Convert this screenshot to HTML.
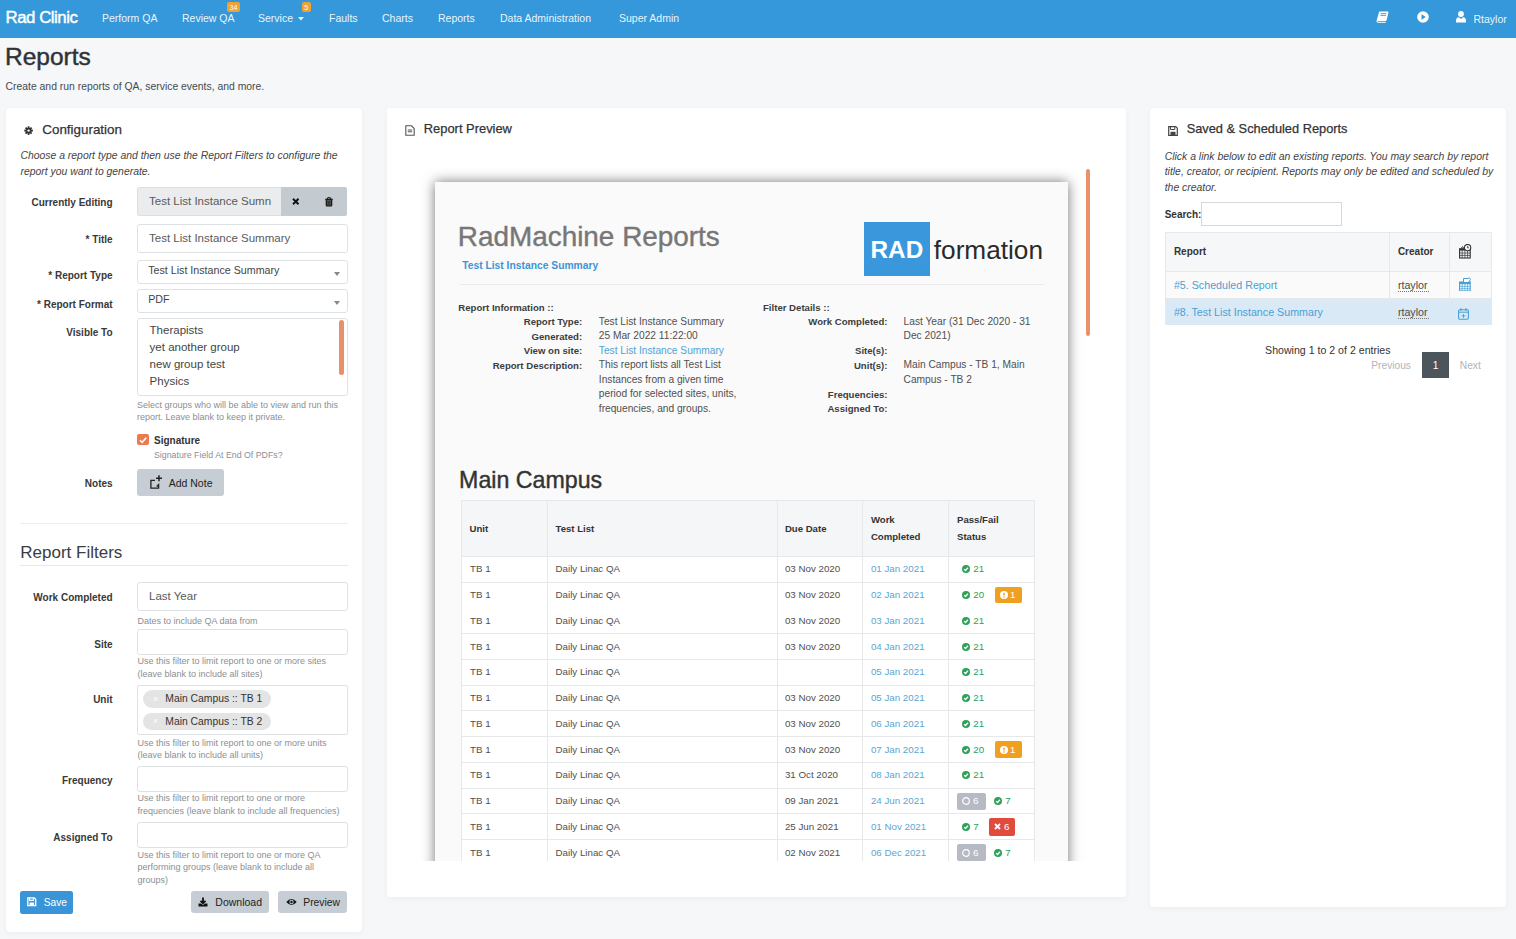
<!DOCTYPE html>
<html><head><meta charset="utf-8"><style>
html,body{margin:0;padding:0;}
body{width:1516px;height:939px;overflow:hidden;position:relative;background:#f5f7f9;font-family:"Liberation Sans",sans-serif;}
</style></head><body>
<div style="position:absolute;left:0px;top:0px;width:1516px;height:37.5px;background:#3498da;"></div>
<div style="position:absolute;top:9.88px;font-size:16.8px;line-height:16.8px;color:#fff;white-space:nowrap;left:5.50px;letter-spacing:-0.45px;-webkit-text-stroke:0.45px #fff;">Rad Clinic</div>
<div style="position:absolute;top:13.31px;font-size:10.5px;line-height:10.5px;color:#eaf4fb;white-space:nowrap;left:102.00px;">Perform QA</div>
<div style="position:absolute;top:13.31px;font-size:10.5px;line-height:10.5px;color:#eaf4fb;white-space:nowrap;left:182.00px;">Review QA</div>
<div style="position:absolute;left:227px;top:2px;width:13px;height:9.5px;background:#eea236;border-radius:2px;"></div>
<div style="position:absolute;top:3.61px;font-size:7.2px;line-height:7.2px;color:#fff;white-space:nowrap;left:227.00px;width:13px;text-align:center;">34</div>
<div style="position:absolute;top:13.31px;font-size:10.5px;line-height:10.5px;color:#eaf4fb;white-space:nowrap;left:258.00px;">Service</div>
<svg style="position:absolute;left:298px;top:17px;" width="6" height="4" viewBox="0 0 6 4"><path d="M0 0H6L3 3.5Z" fill="#eaf4fb"/></svg>
<div style="position:absolute;left:301.5px;top:2px;width:9.5px;height:9.5px;background:#eea236;border-radius:2px;"></div>
<div style="position:absolute;top:3.61px;font-size:7.2px;line-height:7.2px;color:#fff;white-space:nowrap;left:301.25px;width:10px;text-align:center;">5</div>
<div style="position:absolute;top:13.31px;font-size:10.5px;line-height:10.5px;color:#eaf4fb;white-space:nowrap;left:329.00px;">Faults</div>
<div style="position:absolute;top:13.31px;font-size:10.5px;line-height:10.5px;color:#eaf4fb;white-space:nowrap;left:382.00px;">Charts</div>
<div style="position:absolute;top:13.31px;font-size:10.5px;line-height:10.5px;color:#eaf4fb;white-space:nowrap;left:438.00px;">Reports</div>
<div style="position:absolute;top:13.31px;font-size:10.5px;line-height:10.5px;color:#eaf4fb;white-space:nowrap;left:500.00px;">Data Administration</div>
<div style="position:absolute;top:13.31px;font-size:10.5px;line-height:10.5px;color:#eaf4fb;white-space:nowrap;left:619.00px;">Super Admin</div>
<svg style="position:absolute;left:1375.5px;top:11.3px;" width="13" height="12" viewBox="0 0 13 12"><path d="M3.2 0.6H11.6Q12.6 0.6 12.4 1.6L10.6 9.2Q10.4 10 9.6 10H1.6Q0.6 10 0.8 9Z" fill="#fff"/><path d="M4.8 2.6H10.3M4.4 4.4H9.9" stroke="#3498da" stroke-width="0.9"/><path d="M0.9 9.6Q0.7 11.3 2 11.3H9.8" stroke="#fff" stroke-width="1" fill="none"/></svg>
<svg style="position:absolute;left:1417px;top:11px;" width="12" height="12" viewBox="0 0 12 12"><circle cx="6" cy="6" r="5.8" fill="#fff"/><path d="M4.5 3.2V8.8L8.8 6Z" fill="#3598da"/></svg>
<svg style="position:absolute;left:1456px;top:11px;" width="10" height="12" viewBox="0 0 10 12"><circle cx="5" cy="3" r="2.9" fill="#fff"/><path d="M0 11.5V9.5Q0 6.5 3 6.3L5 8L7 6.3Q10 6.5 10 9.5V11.5Z" fill="#fff"/></svg>
<div style="position:absolute;top:13.81px;font-size:10.5px;line-height:10.5px;color:#eaf4fb;white-space:nowrap;left:1473.50px;">Rtaylor</div>
<div style="position:absolute;top:44.96px;font-size:24.5px;line-height:24.5px;color:#2f3237;white-space:nowrap;left:5.00px;-webkit-text-stroke:0.45px #2f3237;">Reports</div>
<div style="position:absolute;top:81.70px;font-size:10.4px;line-height:10.4px;color:#454a50;white-space:nowrap;left:5.50px;">Create and run reports of QA, service events, and more.</div>
<div style="position:absolute;left:6px;top:108px;width:356px;height:824px;background:#fff;border-radius:4px;box-shadow:0 2px 6px rgba(0,0,0,0.045);"></div>
<div style="position:absolute;left:386.5px;top:108px;width:739.0px;height:788.8px;background:#fff;border-radius:4px;box-shadow:0 2px 6px rgba(0,0,0,0.045);border-radius:3px;"></div>
<div style="position:absolute;left:1150px;top:108px;width:355.70000000000005px;height:798.5px;background:#fff;border-radius:4px;box-shadow:0 2px 6px rgba(0,0,0,0.045);"></div>
<svg style="position:absolute;left:23.8px;top:125.9px;" width="9.2" height="9.2" viewBox="0 0 10 10"><g fill="#333"><circle cx="5" cy="5" r="3.2"/><rect x="4" y="0.3" width="2" height="2.4" transform="rotate(0 5 5)"/><rect x="4" y="0.3" width="2" height="2.4" transform="rotate(45 5 5)"/><rect x="4" y="0.3" width="2" height="2.4" transform="rotate(90 5 5)"/><rect x="4" y="0.3" width="2" height="2.4" transform="rotate(135 5 5)"/><rect x="4" y="0.3" width="2" height="2.4" transform="rotate(180 5 5)"/><rect x="4" y="0.3" width="2" height="2.4" transform="rotate(225 5 5)"/><rect x="4" y="0.3" width="2" height="2.4" transform="rotate(270 5 5)"/><rect x="4" y="0.3" width="2" height="2.4" transform="rotate(315 5 5)"/></g><circle cx="5" cy="5" r="1.3" fill="#fff"/></svg>
<div style="position:absolute;top:122.86px;font-size:13.4px;line-height:13.4px;color:#333;white-space:nowrap;left:42.30px;-webkit-text-stroke:0.25px #333;">Configuration</div>
<div style="position:absolute;top:151.30px;font-size:10.4px;line-height:10.4px;color:#444;white-space:nowrap;font-style:italic;left:20.50px;">Choose a report type and then use the Report Filters to configure the</div>
<div style="position:absolute;top:166.80px;font-size:10.4px;line-height:10.4px;color:#444;white-space:nowrap;font-style:italic;left:20.50px;">report you want to generate.</div>
<div style="position:absolute;top:198.43px;font-size:10px;line-height:10px;color:#383838;white-space:nowrap;font-weight:bold;left:2.60px;width:110px;text-align:right;">Currently Editing</div>
<div style="position:absolute;left:137px;top:186.8px;width:144.3px;height:29.399999999999977px;background:#ebeced;border:1px solid #dcdfe2;border-right:none;border-radius:3px 0 0 3px;box-sizing:border-box;"></div>
<div style="position:absolute;top:195.77px;font-size:11.5px;line-height:11.5px;color:#5a5a5a;white-space:nowrap;left:149.00px;">Test List Instance Sumn</div>
<div style="position:absolute;left:281.3px;top:186.5px;width:65.69999999999999px;height:29.30000000000001px;background:#c3cbd1;border-radius:0 2px 2px 0;"></div>
<svg style="position:absolute;left:291.7px;top:198.2px;" width="7.5" height="7" viewBox="0 0 7.5 7"><path d="M1 0.8L6.5 6.2M6.5 0.8L1 6.2" stroke="#111" stroke-width="1.9"/></svg>
<svg style="position:absolute;left:324.6px;top:197px;" width="8" height="9.5" viewBox="0 0 8 9.5"><path d="M0.3 2.3H7.7" stroke="#111" stroke-width="1.3"/><path d="M2.6 2V1.1Q2.6 0.5 3.2 0.5H4.8Q5.4 0.5 5.4 1.1V2" stroke="#111" stroke-width="1" fill="none"/><path d="M1.3 3V8.3Q1.3 9 2 9H6Q6.7 9 6.7 8.3V3" stroke="#111" stroke-width="1.2" fill="#555"/><path d="M3.2 4V8M4.8 4V8" stroke="#111" stroke-width="0.6"/></svg>
<div style="position:absolute;top:234.73px;font-size:10px;line-height:10px;color:#383838;white-space:nowrap;font-weight:bold;left:2.60px;width:110px;text-align:right;">* Title</div>
<div style="position:absolute;left:137px;top:223.5px;width:210.5px;height:29.0px;background:#fff;border:1px solid #dfe2e5;border-radius:3px;box-sizing:border-box;"></div>
<div style="position:absolute;top:232.77px;font-size:11.5px;line-height:11.5px;color:#5a5a5a;white-space:nowrap;left:149.00px;">Test List Instance Summary</div>
<div style="position:absolute;top:270.54px;font-size:10px;line-height:10px;color:#383838;white-space:nowrap;font-weight:bold;left:2.60px;width:110px;text-align:right;">* Report Type</div>
<div style="position:absolute;left:137px;top:259.5px;width:210.5px;height:24.5px;background:#fff;border:1px solid #dfe2e5;border-radius:3px;box-sizing:border-box;"></div>
<div style="position:absolute;top:265.24px;font-size:10.7px;line-height:10.7px;color:#444;white-space:nowrap;left:148.20px;">Test List Instance Summary</div>
<svg style="position:absolute;left:334px;top:271.5px;" width="6" height="4" viewBox="0 0 6 4"><path d="M0 0H6L3 4Z" fill="#888"/></svg>
<div style="position:absolute;top:299.54px;font-size:10px;line-height:10px;color:#383838;white-space:nowrap;font-weight:bold;left:2.60px;width:110px;text-align:right;">* Report Format</div>
<div style="position:absolute;left:137px;top:288.5px;width:210.5px;height:24.5px;background:#fff;border:1px solid #dfe2e5;border-radius:3px;box-sizing:border-box;"></div>
<div style="position:absolute;top:294.24px;font-size:10.7px;line-height:10.7px;color:#444;white-space:nowrap;left:148.20px;">PDF</div>
<svg style="position:absolute;left:334px;top:300.5px;" width="6" height="4" viewBox="0 0 6 4"><path d="M0 0H6L3 4Z" fill="#888"/></svg>
<div style="position:absolute;top:328.04px;font-size:10px;line-height:10px;color:#383838;white-space:nowrap;font-weight:bold;left:2.60px;width:110px;text-align:right;">Visible To</div>
<div style="position:absolute;left:137px;top:317.5px;width:210.5px;height:78.0px;background:#fff;border:1px solid #dfe2e5;border-radius:3px;box-sizing:border-box;"></div>
<div style="position:absolute;top:324.57px;font-size:11.5px;line-height:11.5px;color:#444;white-space:nowrap;left:149.60px;">Therapists</div>
<div style="position:absolute;top:341.77px;font-size:11.5px;line-height:11.5px;color:#444;white-space:nowrap;left:149.60px;">yet another group</div>
<div style="position:absolute;top:358.97px;font-size:11.5px;line-height:11.5px;color:#444;white-space:nowrap;left:149.60px;">new group test</div>
<div style="position:absolute;top:376.17px;font-size:11.5px;line-height:11.5px;color:#444;white-space:nowrap;left:149.60px;">Physics</div>
<div style="position:absolute;left:138px;top:392px;width:200px;height:3px;overflow:hidden;"><div style="position:absolute;left:11.6px;top:-10px;font-size:11.5px;line-height:12px;color:#444;">Administrators</div></div>
<div style="position:absolute;left:339px;top:320px;width:5px;height:55px;background:#e8906a;border-radius:3px;"></div>
<div style="position:absolute;top:401.08px;font-size:9px;line-height:9px;color:#8a8f94;white-space:nowrap;left:137.00px;">Select groups who will be able to view and run this</div>
<div style="position:absolute;top:413.08px;font-size:9px;line-height:9px;color:#8a8f94;white-space:nowrap;left:137.00px;">report. Leave blank to keep it private.</div>
<div style="position:absolute;left:137px;top:433.8px;width:12.199999999999989px;height:11.599999999999966px;background:#ec7a4f;border-radius:2px;"></div>
<svg style="position:absolute;left:137px;top:433.8px;" width="12" height="12" viewBox="0 0 12 12"><path d="M3 6.2L5.2 8.3L9.2 3.8" stroke="#fff" stroke-width="1.5" fill="none"/></svg>
<div style="position:absolute;top:436.24px;font-size:10px;line-height:10px;color:#333;white-space:nowrap;font-weight:bold;left:154.00px;">Signature</div>
<div style="position:absolute;top:451.25px;font-size:8.8px;line-height:8.8px;color:#8a8f94;white-space:nowrap;left:154.00px;">Signature Field At End Of PDFs?</div>
<div style="position:absolute;top:479.24px;font-size:10px;line-height:10px;color:#383838;white-space:nowrap;font-weight:bold;left:2.60px;width:110px;text-align:right;">Notes</div>
<div style="position:absolute;left:137px;top:469.2px;width:86.5px;height:26.600000000000023px;background:#c6cdd4;border-radius:3px;"></div>
<svg style="position:absolute;left:149.5px;top:474px;" width="13" height="15" viewBox="0 0 13 15"><path d="M5 6.3H0.9V14.2H8.6V10.5L7.2 11.9V12.8" stroke="#222" stroke-width="1.3" fill="none"/><path d="M9 1.2V7.2M6 4.2H12" stroke="#222" stroke-width="1.5"/></svg>
<div style="position:absolute;top:478.01px;font-size:10.5px;line-height:10.5px;color:#222;white-space:nowrap;left:168.70px;">Add Note</div>
<div style="position:absolute;left:20px;top:523px;width:328px;height:1px;background:#eceff1;"></div>
<div style="position:absolute;top:544.11px;font-size:17px;line-height:17px;color:#3a3d41;white-space:nowrap;left:20.30px;">Report Filters</div>
<div style="position:absolute;left:20px;top:564.5px;width:328px;height:1.0px;background:#e6e9ec;"></div>
<div style="position:absolute;top:592.94px;font-size:10px;line-height:10px;color:#383838;white-space:nowrap;font-weight:bold;left:2.60px;width:110px;text-align:right;">Work Completed</div>
<div style="position:absolute;left:137px;top:581.5px;width:210.5px;height:29.0px;background:#fff;border:1px solid #dfe2e5;border-radius:3px;box-sizing:border-box;"></div>
<div style="position:absolute;top:591.47px;font-size:11.5px;line-height:11.5px;color:#5a5a5a;white-space:nowrap;left:149.00px;">Last Year</div>
<div style="position:absolute;top:616.68px;font-size:9px;line-height:9px;color:#8a8f94;white-space:nowrap;left:137.50px;">Dates to include QA data from</div>
<div style="position:absolute;top:639.63px;font-size:10px;line-height:10px;color:#383838;white-space:nowrap;font-weight:bold;left:2.60px;width:110px;text-align:right;">Site</div>
<div style="position:absolute;left:137px;top:628.5px;width:210.5px;height:26.0px;background:#fff;border:1px solid #dfe2e5;border-radius:3px;box-sizing:border-box;"></div>
<div style="position:absolute;top:657.28px;font-size:9px;line-height:9px;color:#8a8f94;white-space:nowrap;left:137.50px;">Use this filter to limit report to one or more sites</div>
<div style="position:absolute;top:670.28px;font-size:9px;line-height:9px;color:#8a8f94;white-space:nowrap;left:137.50px;">(leave blank to include all sites)</div>
<div style="position:absolute;top:694.84px;font-size:10px;line-height:10px;color:#383838;white-space:nowrap;font-weight:bold;left:2.60px;width:110px;text-align:right;">Unit</div>
<div style="position:absolute;left:137px;top:685.3px;width:210.5px;height:50.200000000000045px;background:#fff;border:1px solid #dfe2e5;border-radius:3px;box-sizing:border-box;border-radius:2px;"></div>
<div style="position:absolute;left:142.5px;top:690.2px;width:128.5px;height:17.600000000000023px;background:#e4e4e4;border-radius:9px;"></div>
<div style="position:absolute;top:694.88px;font-size:9px;line-height:9px;color:#fff;white-space:nowrap;left:153.00px;">×</div>
<div style="position:absolute;top:694.14px;font-size:10.35px;line-height:10.35px;color:#333;white-space:nowrap;left:165.30px;">Main Campus :: TB 1</div>
<div style="position:absolute;left:142.5px;top:712.7px;width:128.5px;height:17.600000000000023px;background:#e4e4e4;border-radius:9px;"></div>
<div style="position:absolute;top:717.38px;font-size:9px;line-height:9px;color:#fff;white-space:nowrap;left:153.00px;">×</div>
<div style="position:absolute;top:716.64px;font-size:10.35px;line-height:10.35px;color:#333;white-space:nowrap;left:165.30px;">Main Campus :: TB 2</div>
<div style="position:absolute;top:738.68px;font-size:9px;line-height:9px;color:#8a8f94;white-space:nowrap;left:137.50px;">Use this filter to limit report to one or more units</div>
<div style="position:absolute;top:750.98px;font-size:9px;line-height:9px;color:#8a8f94;white-space:nowrap;left:137.50px;">(leave blank to include all units)</div>
<div style="position:absolute;top:776.44px;font-size:10px;line-height:10px;color:#383838;white-space:nowrap;font-weight:bold;left:2.60px;width:110px;text-align:right;">Frequency</div>
<div style="position:absolute;left:137px;top:765.5px;width:210.5px;height:26.0px;background:#fff;border:1px solid #dfe2e5;border-radius:3px;box-sizing:border-box;"></div>
<div style="position:absolute;top:794.48px;font-size:9px;line-height:9px;color:#8a8f94;white-space:nowrap;left:137.50px;">Use this filter to limit report to one or more</div>
<div style="position:absolute;top:807.38px;font-size:9px;line-height:9px;color:#8a8f94;white-space:nowrap;left:137.50px;">frequencies (leave blank to include all frequencies)</div>
<div style="position:absolute;top:832.74px;font-size:10px;line-height:10px;color:#383838;white-space:nowrap;font-weight:bold;left:2.60px;width:110px;text-align:right;">Assigned To</div>
<div style="position:absolute;left:137px;top:822.3px;width:210.5px;height:25.40000000000009px;background:#fff;border:1px solid #dfe2e5;border-radius:3px;box-sizing:border-box;"></div>
<div style="position:absolute;top:851.08px;font-size:9px;line-height:9px;color:#8a8f94;white-space:nowrap;left:137.50px;">Use this filter to limit report to one or more QA</div>
<div style="position:absolute;top:863.48px;font-size:9px;line-height:9px;color:#8a8f94;white-space:nowrap;left:137.50px;">performing groups (leave blank to include all</div>
<div style="position:absolute;top:875.88px;font-size:9px;line-height:9px;color:#8a8f94;white-space:nowrap;left:137.50px;">groups)</div>
<div style="position:absolute;left:20.2px;top:891px;width:53.2px;height:22.700000000000045px;background:#3a95d8;border-radius:2.5px;"></div>
<svg style="position:absolute;left:27.3px;top:897px;" width="9.5" height="9.5" viewBox="0 0 9.5 9.5"><path d="M0.8 0.8H7.3L8.7 2.2V8.7H0.8Z" stroke="#fff" stroke-width="1.3" fill="none"/><path d="M2.6 1V3.4H6.4V1" stroke="#fff" stroke-width="1.1" fill="none"/><rect x="2.6" y="5.5" width="4.4" height="2.6" fill="#fff"/></svg>
<div style="position:absolute;top:897.67px;font-size:10.2px;line-height:10.2px;color:#fff;white-space:nowrap;left:43.80px;">Save</div>
<div style="position:absolute;left:191px;top:891px;width:78px;height:22.200000000000045px;background:#c6cdd4;border-radius:3px;"></div>
<svg style="position:absolute;left:198.3px;top:896.5px;" width="10" height="10" viewBox="0 0 10 10"><path d="M5 0.5V6M2.5 3.8L5 6.3L7.5 3.8" stroke="#111" stroke-width="1.8" fill="none"/><path d="M0.5 6.5V9.5H9.5V6.5H7L5 8L3 6.5Z" fill="#111"/></svg>
<div style="position:absolute;top:896.81px;font-size:10.5px;line-height:10.5px;color:#222;white-space:nowrap;left:215.30px;">Download</div>
<div style="position:absolute;left:278px;top:891px;width:69.19999999999999px;height:22.200000000000045px;background:#c6cdd4;border-radius:3px;"></div>
<svg style="position:absolute;left:285.5px;top:898px;" width="11" height="8" viewBox="0 0 11 8"><path d="M0.3 4Q5.5 -2 10.7 4Q5.5 10 0.3 4Z" fill="#111"/><circle cx="5.5" cy="4" r="2.2" fill="#c6cdd4"/><circle cx="5.5" cy="4" r="1.2" fill="#111"/></svg>
<div style="position:absolute;top:898.08px;font-size:10.3px;line-height:10.3px;color:#222;white-space:nowrap;left:303.30px;">Preview</div>
<svg style="position:absolute;left:405px;top:124.8px;" width="10" height="11" viewBox="0 0 10 11"><path d="M0.8 0.8H6.5L9.2 3.5V10.2H0.8Z" stroke="#555" stroke-width="1.1" fill="none"/><path d="M2.8 5H7.2M2.8 6.8H7.2" stroke="#555" stroke-width="1.1"/></svg>
<div style="position:absolute;top:123.28px;font-size:12.9px;line-height:12.9px;color:#333;white-space:nowrap;left:423.80px;-webkit-text-stroke:0.25px #333;">Report Preview</div>
<div style="position:absolute;left:420px;top:167px;width:673px;height:694px;overflow:hidden;"><div style="position:absolute;left:-420px;top:-167px;width:1516px;height:1200px;">
<div style="position:absolute;left:435px;top:181.5px;width:633px;height:1218.5px;background:#fafafa;box-shadow:0 0 12px rgba(0,0,0,0.55);"></div>
<div style="position:absolute;top:222.98px;font-size:27.9px;line-height:27.9px;color:#777;white-space:nowrap;left:457.80px;-webkit-text-stroke:0.4px #777;">RadMachine Reports</div>
<div style="position:absolute;top:261.28px;font-size:10.3px;line-height:10.3px;color:#3d94d6;white-space:nowrap;font-weight:bold;left:462.20px;">Test List Instance Summary</div>
<div style="position:absolute;left:459.5px;top:284px;width:584.5px;height:1px;background:#ebebeb;"></div>
<div style="position:absolute;left:864.3px;top:222px;width:65.40000000000009px;height:53.5px;background:#3b97dc;"></div>
<div style="position:absolute;top:238.33px;font-size:24.3px;line-height:24.3px;color:#fff;white-space:nowrap;font-weight:bold;left:864.40px;width:65px;text-align:center;">RAD</div>
<div style="position:absolute;top:236.72px;font-size:26.2px;line-height:26.2px;color:#2a2a2a;white-space:nowrap;left:933.80px;">formation</div>
<div style="position:absolute;top:303.37px;font-size:9.6px;line-height:9.6px;color:#3d3d3d;white-space:nowrap;font-weight:bold;left:458.30px;">Report Information ::</div>
<div style="position:absolute;top:317.27px;font-size:9.6px;line-height:9.6px;color:#3d3d3d;white-space:nowrap;font-weight:bold;left:432.20px;width:150px;text-align:right;">Report Type:</div>
<div style="position:absolute;top:316.77px;font-size:10.2px;line-height:10.2px;color:#505050;white-space:nowrap;left:598.80px;">Test List Instance Summary</div>
<div style="position:absolute;top:331.77px;font-size:9.6px;line-height:9.6px;color:#3d3d3d;white-space:nowrap;font-weight:bold;left:432.20px;width:150px;text-align:right;">Generated:</div>
<div style="position:absolute;top:331.27px;font-size:10.2px;line-height:10.2px;color:#505050;white-space:nowrap;left:598.80px;">25 Mar 2022 11:22:00</div>
<div style="position:absolute;top:346.27px;font-size:9.6px;line-height:9.6px;color:#3d3d3d;white-space:nowrap;font-weight:bold;left:432.20px;width:150px;text-align:right;">View on site:</div>
<div style="position:absolute;top:345.77px;font-size:10.2px;line-height:10.2px;color:#4fa3d6;white-space:nowrap;left:598.80px;">Test List Instance Summary</div>
<div style="position:absolute;top:360.77px;font-size:9.6px;line-height:9.6px;color:#3d3d3d;white-space:nowrap;font-weight:bold;left:432.20px;width:150px;text-align:right;">Report Description:</div>
<div style="position:absolute;top:360.27px;font-size:10.2px;line-height:10.2px;color:#505050;white-space:nowrap;left:598.80px;">This report lists all Test List</div>
<div style="position:absolute;top:374.77px;font-size:10.2px;line-height:10.2px;color:#505050;white-space:nowrap;left:598.80px;">Instances from a given time</div>
<div style="position:absolute;top:389.27px;font-size:10.2px;line-height:10.2px;color:#505050;white-space:nowrap;left:598.80px;">period for selected sites, units,</div>
<div style="position:absolute;top:403.77px;font-size:10.2px;line-height:10.2px;color:#505050;white-space:nowrap;left:598.80px;">frequencies, and groups.</div>
<div style="position:absolute;top:303.37px;font-size:9.6px;line-height:9.6px;color:#3d3d3d;white-space:nowrap;font-weight:bold;left:763.00px;">Filter Details ::</div>
<div style="position:absolute;top:317.27px;font-size:9.6px;line-height:9.6px;color:#3d3d3d;white-space:nowrap;font-weight:bold;left:737.50px;width:150px;text-align:right;">Work Completed:</div>
<div style="position:absolute;top:316.77px;font-size:10.2px;line-height:10.2px;color:#505050;white-space:nowrap;left:903.60px;">Last Year (31 Dec 2020 - 31</div>
<div style="position:absolute;top:331.27px;font-size:10.2px;line-height:10.2px;color:#505050;white-space:nowrap;left:903.60px;">Dec 2021)</div>
<div style="position:absolute;top:346.27px;font-size:9.6px;line-height:9.6px;color:#3d3d3d;white-space:nowrap;font-weight:bold;left:737.50px;width:150px;text-align:right;">Site(s):</div>
<div style="position:absolute;top:360.77px;font-size:9.6px;line-height:9.6px;color:#3d3d3d;white-space:nowrap;font-weight:bold;left:737.50px;width:150px;text-align:right;">Unit(s):</div>
<div style="position:absolute;top:360.27px;font-size:10.2px;line-height:10.2px;color:#505050;white-space:nowrap;left:903.60px;">Main Campus - TB 1, Main</div>
<div style="position:absolute;top:374.77px;font-size:10.2px;line-height:10.2px;color:#505050;white-space:nowrap;left:903.60px;">Campus - TB 2</div>
<div style="position:absolute;top:389.77px;font-size:9.6px;line-height:9.6px;color:#3d3d3d;white-space:nowrap;font-weight:bold;left:737.50px;width:150px;text-align:right;">Frequencies:</div>
<div style="position:absolute;top:404.27px;font-size:9.6px;line-height:9.6px;color:#3d3d3d;white-space:nowrap;font-weight:bold;left:737.50px;width:150px;text-align:right;">Assigned To:</div>
<div style="position:absolute;top:469.46px;font-size:23.2px;line-height:23.2px;color:#333;white-space:nowrap;left:459.10px;-webkit-text-stroke:0.4px #333;">Main Campus</div>
<div style="position:absolute;left:461.2px;top:500.4px;width:573.3999999999999px;height:55.80000000000007px;background:#f4f6f8;"></div>
<div style="position:absolute;left:461.2px;top:1000px;width:573.3999999999999px;height:1px;"></div>
<div style="position:absolute;left:461.2px;top:556.2px;width:573.3999999999999px;height:314.12px;background:#fff;"></div>
<div style="position:absolute;left:461.2px;top:500.4px;width:573.3999999999999px;height:1.0px;background:#e6e8ea;"></div>
<div style="position:absolute;left:461.2px;top:555.7px;width:573.3999999999999px;height:1.0px;background:#e6e8ea;"></div>
<div style="position:absolute;left:461.2px;top:581.5px;width:573.3999999999999px;height:1.0px;background:#e6e8ea;"></div>
<div style="position:absolute;left:461.2px;top:633.0px;width:573.3999999999999px;height:1.0px;background:#e6e8ea;"></div>
<div style="position:absolute;left:461.2px;top:658.7px;width:573.3999999999999px;height:1.0px;background:#e6e8ea;"></div>
<div style="position:absolute;left:461.2px;top:684.5px;width:573.3999999999999px;height:1.0px;background:#e6e8ea;"></div>
<div style="position:absolute;left:461.2px;top:710.3px;width:573.3999999999999px;height:1.0px;background:#e6e8ea;"></div>
<div style="position:absolute;left:461.2px;top:736.0px;width:573.3999999999999px;height:1.0px;background:#e6e8ea;"></div>
<div style="position:absolute;left:461.2px;top:761.8px;width:573.3999999999999px;height:1.0px;background:#e6e8ea;"></div>
<div style="position:absolute;left:461.2px;top:787.5px;width:573.3999999999999px;height:1.0px;background:#e6e8ea;"></div>
<div style="position:absolute;left:461.2px;top:813.3px;width:573.3999999999999px;height:1.0px;background:#e6e8ea;"></div>
<div style="position:absolute;left:461.2px;top:839.1px;width:573.3999999999999px;height:1.0px;background:#e6e8ea;"></div>
<div style="position:absolute;left:461.2px;top:864.8px;width:573.3999999999999px;height:1.0px;background:#e6e8ea;"></div>
<div style="position:absolute;left:460.7px;top:500.4px;width:1.0px;height:399.6px;background:#e6e8ea;"></div>
<div style="position:absolute;left:546.8px;top:500.4px;width:1.0px;height:399.6px;background:#e6e8ea;"></div>
<div style="position:absolute;left:776.5px;top:500.4px;width:1.0px;height:399.6px;background:#e6e8ea;"></div>
<div style="position:absolute;left:862.0px;top:500.4px;width:1.0px;height:399.6px;background:#e6e8ea;"></div>
<div style="position:absolute;left:948.1px;top:500.4px;width:1.0px;height:399.6px;background:#e6e8ea;"></div>
<div style="position:absolute;left:1034.1px;top:500.4px;width:1.0px;height:399.6px;background:#e6e8ea;"></div>
<div style="position:absolute;top:524.07px;font-size:9.6px;line-height:9.6px;color:#333;white-space:nowrap;font-weight:bold;left:469.50px;">Unit</div>
<div style="position:absolute;top:524.07px;font-size:9.6px;line-height:9.6px;color:#333;white-space:nowrap;font-weight:bold;left:555.50px;">Test List</div>
<div style="position:absolute;top:524.07px;font-size:9.6px;line-height:9.6px;color:#333;white-space:nowrap;font-weight:bold;left:784.90px;">Due Date</div>
<div style="position:absolute;top:514.87px;font-size:9.6px;line-height:9.6px;color:#333;white-space:nowrap;font-weight:bold;left:870.90px;">Work</div>
<div style="position:absolute;top:532.07px;font-size:9.6px;line-height:9.6px;color:#333;white-space:nowrap;font-weight:bold;left:870.90px;">Completed</div>
<div style="position:absolute;top:514.87px;font-size:9.6px;line-height:9.6px;color:#333;white-space:nowrap;font-weight:bold;left:957.00px;">Pass/Fail</div>
<div style="position:absolute;top:532.07px;font-size:9.6px;line-height:9.6px;color:#333;white-space:nowrap;font-weight:bold;left:957.00px;">Status</div>
<div style="position:absolute;top:564.25px;font-size:9.75px;line-height:9.75px;color:#505050;white-space:nowrap;left:470.00px;">TB 1</div>
<div style="position:absolute;top:564.25px;font-size:9.75px;line-height:9.75px;color:#505050;white-space:nowrap;left:555.50px;">Daily Linac QA</div>
<div style="position:absolute;top:564.25px;font-size:9.75px;line-height:9.75px;color:#505050;white-space:nowrap;left:784.90px;">03 Nov 2020</div>
<div style="position:absolute;top:564.25px;font-size:9.75px;line-height:9.75px;color:#5aa6d4;white-space:nowrap;left:870.90px;">01 Jan 2021</div>
<svg style="position:absolute;left:961.8px;top:565.2px;" width="8" height="8" viewBox="0 0 8 8"><circle cx="4" cy="4" r="4" fill="#2ea15a"/><path d="M2.1 4.1L3.5 5.5L6 2.8" stroke="#fff" stroke-width="1.3" fill="none"/></svg>
<div style="position:absolute;top:564.25px;font-size:9.75px;line-height:9.75px;color:#2ea15a;white-space:nowrap;left:973.30px;">21</div>
<div style="position:absolute;top:590.01px;font-size:9.75px;line-height:9.75px;color:#505050;white-space:nowrap;left:470.00px;">TB 1</div>
<div style="position:absolute;top:590.01px;font-size:9.75px;line-height:9.75px;color:#505050;white-space:nowrap;left:555.50px;">Daily Linac QA</div>
<div style="position:absolute;top:590.01px;font-size:9.75px;line-height:9.75px;color:#505050;white-space:nowrap;left:784.90px;">03 Nov 2020</div>
<div style="position:absolute;top:590.01px;font-size:9.75px;line-height:9.75px;color:#5aa6d4;white-space:nowrap;left:870.90px;">02 Jan 2021</div>
<svg style="position:absolute;left:961.8px;top:591.0px;" width="8" height="8" viewBox="0 0 8 8"><circle cx="4" cy="4" r="4" fill="#2ea15a"/><path d="M2.1 4.1L3.5 5.5L6 2.8" stroke="#fff" stroke-width="1.3" fill="none"/></svg>
<div style="position:absolute;top:590.01px;font-size:9.75px;line-height:9.75px;color:#2ea15a;white-space:nowrap;left:973.30px;">20</div>
<div style="position:absolute;left:994.9px;top:586.8px;width:26.800000000000068px;height:16.700000000000045px;background:#f0a020;border-radius:2px;"></div>
<svg style="position:absolute;left:999.5px;top:591.0px;" width="8" height="8" viewBox="0 0 8 8"><circle cx="4" cy="4" r="4" fill="#fff"/><path d="M4 1.8V4.6" stroke="#f0a020" stroke-width="1.4"/><circle cx="4" cy="6" r="0.75" fill="#f0a020"/></svg>
<div style="position:absolute;top:590.01px;font-size:9.75px;line-height:9.75px;color:#fff;white-space:nowrap;left:1010.00px;">1</div>
<div style="position:absolute;top:615.77px;font-size:9.75px;line-height:9.75px;color:#505050;white-space:nowrap;left:470.00px;">TB 1</div>
<div style="position:absolute;top:615.77px;font-size:9.75px;line-height:9.75px;color:#505050;white-space:nowrap;left:555.50px;">Daily Linac QA</div>
<div style="position:absolute;top:615.77px;font-size:9.75px;line-height:9.75px;color:#505050;white-space:nowrap;left:784.90px;">03 Nov 2020</div>
<div style="position:absolute;top:615.77px;font-size:9.75px;line-height:9.75px;color:#5aa6d4;white-space:nowrap;left:870.90px;">03 Jan 2021</div>
<svg style="position:absolute;left:961.8px;top:616.7px;" width="8" height="8" viewBox="0 0 8 8"><circle cx="4" cy="4" r="4" fill="#2ea15a"/><path d="M2.1 4.1L3.5 5.5L6 2.8" stroke="#fff" stroke-width="1.3" fill="none"/></svg>
<div style="position:absolute;top:615.77px;font-size:9.75px;line-height:9.75px;color:#2ea15a;white-space:nowrap;left:973.30px;">21</div>
<div style="position:absolute;top:641.53px;font-size:9.75px;line-height:9.75px;color:#505050;white-space:nowrap;left:470.00px;">TB 1</div>
<div style="position:absolute;top:641.53px;font-size:9.75px;line-height:9.75px;color:#505050;white-space:nowrap;left:555.50px;">Daily Linac QA</div>
<div style="position:absolute;top:641.53px;font-size:9.75px;line-height:9.75px;color:#505050;white-space:nowrap;left:784.90px;">03 Nov 2020</div>
<div style="position:absolute;top:641.53px;font-size:9.75px;line-height:9.75px;color:#5aa6d4;white-space:nowrap;left:870.90px;">04 Jan 2021</div>
<svg style="position:absolute;left:961.8px;top:642.5px;" width="8" height="8" viewBox="0 0 8 8"><circle cx="4" cy="4" r="4" fill="#2ea15a"/><path d="M2.1 4.1L3.5 5.5L6 2.8" stroke="#fff" stroke-width="1.3" fill="none"/></svg>
<div style="position:absolute;top:641.53px;font-size:9.75px;line-height:9.75px;color:#2ea15a;white-space:nowrap;left:973.30px;">21</div>
<div style="position:absolute;top:667.29px;font-size:9.75px;line-height:9.75px;color:#505050;white-space:nowrap;left:470.00px;">TB 1</div>
<div style="position:absolute;top:667.29px;font-size:9.75px;line-height:9.75px;color:#505050;white-space:nowrap;left:555.50px;">Daily Linac QA</div>
<div style="position:absolute;top:667.29px;font-size:9.75px;line-height:9.75px;color:#5aa6d4;white-space:nowrap;left:870.90px;">05 Jan 2021</div>
<svg style="position:absolute;left:961.8px;top:668.2px;" width="8" height="8" viewBox="0 0 8 8"><circle cx="4" cy="4" r="4" fill="#2ea15a"/><path d="M2.1 4.1L3.5 5.5L6 2.8" stroke="#fff" stroke-width="1.3" fill="none"/></svg>
<div style="position:absolute;top:667.29px;font-size:9.75px;line-height:9.75px;color:#2ea15a;white-space:nowrap;left:973.30px;">21</div>
<div style="position:absolute;top:693.05px;font-size:9.75px;line-height:9.75px;color:#505050;white-space:nowrap;left:470.00px;">TB 1</div>
<div style="position:absolute;top:693.05px;font-size:9.75px;line-height:9.75px;color:#505050;white-space:nowrap;left:555.50px;">Daily Linac QA</div>
<div style="position:absolute;top:693.05px;font-size:9.75px;line-height:9.75px;color:#505050;white-space:nowrap;left:784.90px;">03 Nov 2020</div>
<div style="position:absolute;top:693.05px;font-size:9.75px;line-height:9.75px;color:#5aa6d4;white-space:nowrap;left:870.90px;">05 Jan 2021</div>
<svg style="position:absolute;left:961.8px;top:694.0px;" width="8" height="8" viewBox="0 0 8 8"><circle cx="4" cy="4" r="4" fill="#2ea15a"/><path d="M2.1 4.1L3.5 5.5L6 2.8" stroke="#fff" stroke-width="1.3" fill="none"/></svg>
<div style="position:absolute;top:693.05px;font-size:9.75px;line-height:9.75px;color:#2ea15a;white-space:nowrap;left:973.30px;">21</div>
<div style="position:absolute;top:718.81px;font-size:9.75px;line-height:9.75px;color:#505050;white-space:nowrap;left:470.00px;">TB 1</div>
<div style="position:absolute;top:718.81px;font-size:9.75px;line-height:9.75px;color:#505050;white-space:nowrap;left:555.50px;">Daily Linac QA</div>
<div style="position:absolute;top:718.81px;font-size:9.75px;line-height:9.75px;color:#505050;white-space:nowrap;left:784.90px;">03 Nov 2020</div>
<div style="position:absolute;top:718.81px;font-size:9.75px;line-height:9.75px;color:#5aa6d4;white-space:nowrap;left:870.90px;">06 Jan 2021</div>
<svg style="position:absolute;left:961.8px;top:719.8px;" width="8" height="8" viewBox="0 0 8 8"><circle cx="4" cy="4" r="4" fill="#2ea15a"/><path d="M2.1 4.1L3.5 5.5L6 2.8" stroke="#fff" stroke-width="1.3" fill="none"/></svg>
<div style="position:absolute;top:718.81px;font-size:9.75px;line-height:9.75px;color:#2ea15a;white-space:nowrap;left:973.30px;">21</div>
<div style="position:absolute;top:744.57px;font-size:9.75px;line-height:9.75px;color:#505050;white-space:nowrap;left:470.00px;">TB 1</div>
<div style="position:absolute;top:744.57px;font-size:9.75px;line-height:9.75px;color:#505050;white-space:nowrap;left:555.50px;">Daily Linac QA</div>
<div style="position:absolute;top:744.57px;font-size:9.75px;line-height:9.75px;color:#505050;white-space:nowrap;left:784.90px;">03 Nov 2020</div>
<div style="position:absolute;top:744.57px;font-size:9.75px;line-height:9.75px;color:#5aa6d4;white-space:nowrap;left:870.90px;">07 Jan 2021</div>
<svg style="position:absolute;left:961.8px;top:745.5px;" width="8" height="8" viewBox="0 0 8 8"><circle cx="4" cy="4" r="4" fill="#2ea15a"/><path d="M2.1 4.1L3.5 5.5L6 2.8" stroke="#fff" stroke-width="1.3" fill="none"/></svg>
<div style="position:absolute;top:744.57px;font-size:9.75px;line-height:9.75px;color:#2ea15a;white-space:nowrap;left:973.30px;">20</div>
<div style="position:absolute;left:994.9px;top:741.3px;width:26.800000000000068px;height:16.700000000000045px;background:#f0a020;border-radius:2px;"></div>
<svg style="position:absolute;left:999.5px;top:745.5px;" width="8" height="8" viewBox="0 0 8 8"><circle cx="4" cy="4" r="4" fill="#fff"/><path d="M4 1.8V4.6" stroke="#f0a020" stroke-width="1.4"/><circle cx="4" cy="6" r="0.75" fill="#f0a020"/></svg>
<div style="position:absolute;top:744.57px;font-size:9.75px;line-height:9.75px;color:#fff;white-space:nowrap;left:1010.00px;">1</div>
<div style="position:absolute;top:770.33px;font-size:9.75px;line-height:9.75px;color:#505050;white-space:nowrap;left:470.00px;">TB 1</div>
<div style="position:absolute;top:770.33px;font-size:9.75px;line-height:9.75px;color:#505050;white-space:nowrap;left:555.50px;">Daily Linac QA</div>
<div style="position:absolute;top:770.33px;font-size:9.75px;line-height:9.75px;color:#505050;white-space:nowrap;left:784.90px;">31 Oct 2020</div>
<div style="position:absolute;top:770.33px;font-size:9.75px;line-height:9.75px;color:#5aa6d4;white-space:nowrap;left:870.90px;">08 Jan 2021</div>
<svg style="position:absolute;left:961.8px;top:771.3px;" width="8" height="8" viewBox="0 0 8 8"><circle cx="4" cy="4" r="4" fill="#2ea15a"/><path d="M2.1 4.1L3.5 5.5L6 2.8" stroke="#fff" stroke-width="1.3" fill="none"/></svg>
<div style="position:absolute;top:770.33px;font-size:9.75px;line-height:9.75px;color:#2ea15a;white-space:nowrap;left:973.30px;">21</div>
<div style="position:absolute;top:796.09px;font-size:9.75px;line-height:9.75px;color:#505050;white-space:nowrap;left:470.00px;">TB 1</div>
<div style="position:absolute;top:796.09px;font-size:9.75px;line-height:9.75px;color:#505050;white-space:nowrap;left:555.50px;">Daily Linac QA</div>
<div style="position:absolute;top:796.09px;font-size:9.75px;line-height:9.75px;color:#505050;white-space:nowrap;left:784.90px;">09 Jan 2021</div>
<div style="position:absolute;top:796.09px;font-size:9.75px;line-height:9.75px;color:#5aa6d4;white-space:nowrap;left:870.90px;">24 Jun 2021</div>
<div style="position:absolute;left:957px;top:792.7px;width:29.299999999999955px;height:17.0px;background:#b5bac5;border-radius:2px;"></div>
<svg style="position:absolute;left:961.5px;top:797.0px;" width="8" height="8" viewBox="0 0 8 8"><circle cx="4" cy="4" r="3.3" stroke="#fff" stroke-width="1.2" fill="none"/></svg>
<div style="position:absolute;top:796.09px;font-size:9.75px;line-height:9.75px;color:#fff;white-space:nowrap;left:973.00px;">6</div>
<svg style="position:absolute;left:993.8px;top:797.0px;" width="8" height="8" viewBox="0 0 8 8"><circle cx="4" cy="4" r="4" fill="#2ea15a"/><path d="M2.1 4.1L3.5 5.5L6 2.8" stroke="#fff" stroke-width="1.3" fill="none"/></svg>
<div style="position:absolute;top:796.09px;font-size:9.75px;line-height:9.75px;color:#2ea15a;white-space:nowrap;left:1005.30px;">7</div>
<div style="position:absolute;top:821.85px;font-size:9.75px;line-height:9.75px;color:#505050;white-space:nowrap;left:470.00px;">TB 1</div>
<div style="position:absolute;top:821.85px;font-size:9.75px;line-height:9.75px;color:#505050;white-space:nowrap;left:555.50px;">Daily Linac QA</div>
<div style="position:absolute;top:821.85px;font-size:9.75px;line-height:9.75px;color:#505050;white-space:nowrap;left:784.90px;">25 Jun 2021</div>
<div style="position:absolute;top:821.85px;font-size:9.75px;line-height:9.75px;color:#5aa6d4;white-space:nowrap;left:870.90px;">01 Nov 2021</div>
<svg style="position:absolute;left:961.8px;top:822.8px;" width="8" height="8" viewBox="0 0 8 8"><circle cx="4" cy="4" r="4" fill="#2ea15a"/><path d="M2.1 4.1L3.5 5.5L6 2.8" stroke="#fff" stroke-width="1.3" fill="none"/></svg>
<div style="position:absolute;top:821.85px;font-size:9.75px;line-height:9.75px;color:#2ea15a;white-space:nowrap;left:973.30px;">7</div>
<div style="position:absolute;left:989.2px;top:818.3px;width:25.799999999999955px;height:17.5px;background:#e24a3b;border-radius:2px;"></div>
<svg style="position:absolute;left:994px;top:823.3px;" width="7" height="7" viewBox="0 0 7 7"><path d="M1 1L6 6M6 1L1 6" stroke="#fff" stroke-width="1.8"/></svg>
<div style="position:absolute;top:821.85px;font-size:9.75px;line-height:9.75px;color:#fff;white-space:nowrap;left:1004.00px;">6</div>
<div style="position:absolute;top:847.61px;font-size:9.75px;line-height:9.75px;color:#505050;white-space:nowrap;left:470.00px;">TB 1</div>
<div style="position:absolute;top:847.61px;font-size:9.75px;line-height:9.75px;color:#505050;white-space:nowrap;left:555.50px;">Daily Linac QA</div>
<div style="position:absolute;top:847.61px;font-size:9.75px;line-height:9.75px;color:#505050;white-space:nowrap;left:784.90px;">02 Nov 2021</div>
<div style="position:absolute;top:847.61px;font-size:9.75px;line-height:9.75px;color:#5aa6d4;white-space:nowrap;left:870.90px;">06 Dec 2021</div>
<div style="position:absolute;left:957px;top:844.3px;width:29.299999999999955px;height:17.0px;background:#b5bac5;border-radius:2px;"></div>
<svg style="position:absolute;left:961.5px;top:848.6px;" width="8" height="8" viewBox="0 0 8 8"><circle cx="4" cy="4" r="3.3" stroke="#fff" stroke-width="1.2" fill="none"/></svg>
<div style="position:absolute;top:847.61px;font-size:9.75px;line-height:9.75px;color:#fff;white-space:nowrap;left:973.00px;">6</div>
<svg style="position:absolute;left:993.8px;top:848.6px;" width="8" height="8" viewBox="0 0 8 8"><circle cx="4" cy="4" r="4" fill="#2ea15a"/><path d="M2.1 4.1L3.5 5.5L6 2.8" stroke="#fff" stroke-width="1.3" fill="none"/></svg>
<div style="position:absolute;top:847.61px;font-size:9.75px;line-height:9.75px;color:#2ea15a;white-space:nowrap;left:1005.30px;">7</div>
</div></div>
<div style="position:absolute;left:1085.5px;top:169px;width:4.5px;height:166.5px;background:#e8916c;border-radius:2.5px;"></div>
<svg style="position:absolute;left:1168px;top:125.5px;" width="10" height="10" viewBox="0 0 10 10"><path d="M0.7 0.7H7.8L9.3 2.2V9.3H0.7Z" stroke="#444" stroke-width="1.2" fill="none"/><path d="M2.5 0.8V3.5H6.8V0.8" stroke="#444" stroke-width="1" fill="none"/><rect x="2.5" y="5.8" width="5" height="3.2" fill="#444"/></svg>
<div style="position:absolute;top:123.16px;font-size:12.8px;line-height:12.8px;color:#333;white-space:nowrap;left:1186.70px;-webkit-text-stroke:0.25px #333;">Saved &amp; Scheduled Reports</div>
<div style="position:absolute;top:151.87px;font-size:10.43px;line-height:10.43px;color:#444;white-space:nowrap;font-style:italic;left:1164.70px;">Click a link below to edit an existing reports. You may search by report</div>
<div style="position:absolute;top:167.37px;font-size:10.43px;line-height:10.43px;color:#444;white-space:nowrap;font-style:italic;left:1164.70px;">title, creator, or recipient. Reports may only be edited and scheduled by</div>
<div style="position:absolute;top:182.87px;font-size:10.43px;line-height:10.43px;color:#444;white-space:nowrap;font-style:italic;left:1164.70px;">the creator.</div>
<div style="position:absolute;top:209.63px;font-size:10px;line-height:10px;color:#333;white-space:nowrap;font-weight:bold;left:1164.70px;">Search:</div>
<div style="position:absolute;left:1201px;top:202.4px;width:141px;height:23.799999999999983px;background:#fff;border:1px solid #d5d9dd;box-sizing:border-box;"></div>
<div style="position:absolute;left:1164.7px;top:231.5px;width:327.29999999999995px;height:93.89999999999998px;border:1px solid #e6e8ea;border-bottom:none;box-sizing:border-box;"></div>
<div style="position:absolute;left:1165.7px;top:232.5px;width:325.29999999999995px;height:38.5px;background:#f5f7f9;"></div>
<div style="position:absolute;left:1165.7px;top:271.2px;width:325.29999999999995px;height:27.100000000000023px;background:#fafafa;"></div>
<div style="position:absolute;left:1165.7px;top:298.4px;width:325.29999999999995px;height:27.0px;background:#d9eaf6;"></div>
<div style="position:absolute;left:1164.7px;top:270.7px;width:327.29999999999995px;height:1.0px;background:#e6e8ea;"></div>
<div style="position:absolute;left:1164.7px;top:297.9px;width:327.29999999999995px;height:1.0px;background:#e6e8ea;"></div>
<div style="position:absolute;left:1388.9px;top:232px;width:1.0px;height:93px;background:#e6e8ea;"></div>
<div style="position:absolute;left:1448.9px;top:232px;width:1.0px;height:93px;background:#e6e8ea;"></div>
<div style="position:absolute;top:247.23px;font-size:10px;line-height:10px;color:#333;white-space:nowrap;font-weight:bold;left:1173.90px;">Report</div>
<div style="position:absolute;top:247.23px;font-size:10px;line-height:10px;color:#333;white-space:nowrap;font-weight:bold;left:1397.90px;">Creator</div>
<svg style="position:absolute;left:1458.8px;top:244px;" width="13" height="14.5" viewBox="0 0 13 14.5"><rect x="0.6" y="4.8" width="10.6" height="9.2" stroke="#333" stroke-width="1.1" fill="none"/><rect x="0.6" y="4.6" width="10.6" height="2" fill="#333"/><path d="M0.6 9H11.2M0.6 11.4H11.2M3.2 6.6V14M5.9 6.6V14M8.6 6.6V14" stroke="#333" stroke-width="0.7"/><circle cx="8.6" cy="3.6" r="3.2" fill="#f5f7f9" stroke="#333" stroke-width="1.1"/><path d="M8.6 2.2V3.8H9.9" stroke="#333" stroke-width="0.9" fill="none"/><path d="M2 4.6L3.5 2.6L5 4.6" stroke="#333" stroke-width="1" fill="none"/></svg>
<div style="position:absolute;top:280.14px;font-size:10.7px;line-height:10.7px;color:#4a9fd5;white-space:nowrap;left:1173.90px;">#5. Scheduled Report</div>
<div style="position:absolute;top:307.14px;font-size:10.7px;line-height:10.7px;color:#4a9fd5;white-space:nowrap;left:1173.90px;">#8. Test List Instance Summary</div>
<div style="position:absolute;top:280.14px;font-size:10.7px;line-height:10.7px;color:#4a4a4a;white-space:nowrap;left:1397.90px;">rtaylor</div>
<div style="position:absolute;left:1398px;top:291.0px;width:30.5px;height:1.0px;border-top:1px dotted #777;box-sizing:border-box;"></div>
<div style="position:absolute;top:307.14px;font-size:10.7px;line-height:10.7px;color:#4a4a4a;white-space:nowrap;left:1397.90px;">rtaylor</div>
<div style="position:absolute;left:1398px;top:318.0px;width:30.5px;height:1.0px;border-top:1px dotted #777;box-sizing:border-box;"></div>
<svg style="position:absolute;left:1458.8px;top:276.8px;" width="12.5" height="14.5" viewBox="0 0 12.5 14.5"><rect x="0.6" y="5" width="10.6" height="9" fill="none" stroke="#4a9fd5" stroke-width="1.1"/><rect x="0.6" y="5" width="10.6" height="2.2" fill="#4a9fd5"/><path d="M0.6 9.4H11.2M0.6 11.7H11.2M3.2 7V14M5.9 7V14M8.6 7V14" stroke="#4a9fd5" stroke-width="0.7"/><path d="M4.5 5V1.5H9L10 0.8L11.8 2.4L9.5 5" fill="#fff" stroke="#4a9fd5" stroke-width="1"/></svg>
<svg style="position:absolute;left:1458.2px;top:307.5px;" width="11" height="12" viewBox="0 0 11 12"><rect x="0.6" y="1.8" width="9.8" height="9.4" rx="1.2" fill="none" stroke="#4a9fd5" stroke-width="1.1"/><path d="M0.6 4.2H10.4" stroke="#4a9fd5" stroke-width="1"/><path d="M3 0.3V2.8M8 0.3V2.8" stroke="#4a9fd5" stroke-width="1.3"/><path d="M5.5 5.9V9.9M3.5 7.9H7.5" stroke="#4a9fd5" stroke-width="0.9"/></svg>
<div style="position:absolute;top:344.83px;font-size:10.6px;line-height:10.6px;color:#333;white-space:nowrap;left:1265.10px;">Showing 1 to 2 of 2 entries</div>
<div style="position:absolute;top:360.67px;font-size:10.2px;line-height:10.2px;color:#b0b4b8;white-space:nowrap;left:1371.30px;">Previous</div>
<div style="position:absolute;left:1422.1px;top:352px;width:26.90000000000009px;height:26px;background:#4b555b;"></div>
<div style="position:absolute;top:360.67px;font-size:10.2px;line-height:10.2px;color:#fff;white-space:nowrap;left:1425.50px;width:20px;text-align:center;">1</div>
<div style="position:absolute;top:360.67px;font-size:10.2px;line-height:10.2px;color:#b0b4b8;white-space:nowrap;left:1459.80px;">Next</div>
</body></html>
